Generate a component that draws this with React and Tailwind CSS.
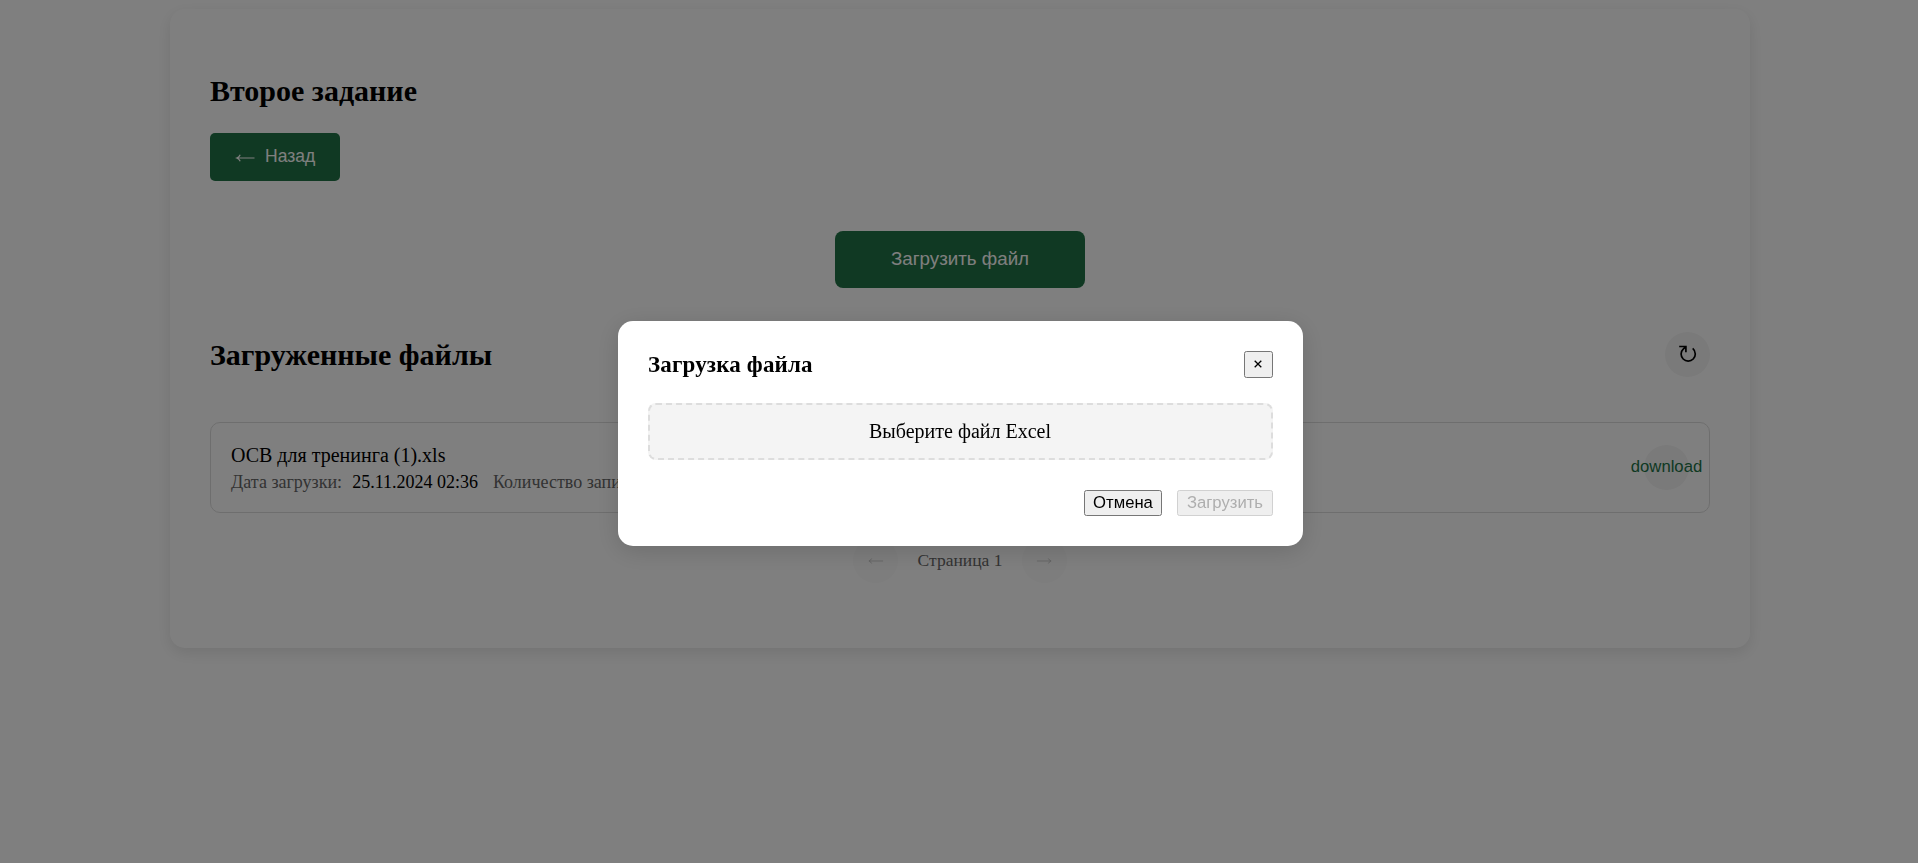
function Arrow({ className }) {
  return (
    <svg viewBox="0 0 20 10" fill="none" stroke="currentColor" strokeWidth="1.2" className={className}>
      <path d="M19.5 5H2.5M5.2 1.8Q4.4 4 1.7 5Q4.4 6 5.2 8.2" />
    </svg>
  );
}

function FileRow() {
  return (
    <div className="flex h-[91px] items-center justify-between rounded-[10px] border border-[#ddd] pl-5 pr-5">
      <div className="flex flex-col">
        <div className="text-[20px] leading-[25px]">ОСВ для тренинга (1).xls</div>
        <div className="mt-[3px] flex whitespace-nowrap text-[18px] leading-[22px] text-[#666]">
          <span>Дата загрузки:</span>
          <span className="ml-[10px] text-black">25.11.2024 02:36</span>
          <span className="ml-[15px]">Количество записей:</span>
          <span className="ml-[10px] text-black">12</span>
        </div>
      </div>
      <button className="flex size-[45px] items-center justify-center rounded-full bg-[#f4f4f4] pb-[2px] font-['Liberation_Sans',sans-serif] text-[16.67px] text-[#217346]">
        download
      </button>
    </div>
  );
}

function Modal() {
  return (
    <div className="fixed inset-0 bg-black/50 pl-[618px] pt-[321px]">
      <div className="flex h-[225px] w-[685px] flex-col rounded-[15px] bg-white p-[30px] shadow-[0_5px_25px_rgba(0,0,0,0.15)]">
        <div className="flex h-[27px] items-center justify-between">
          <h3 className="text-[23px] font-bold leading-[26px] tracking-[0.15px]">Загрузка файла</h3>
          <button className="flex h-[27px] w-[29px] items-center justify-center rounded-[2.5px] border border-[#767676] bg-[#efefef] pb-[2px] pr-px">
            <svg viewBox="0 0 8 8" className="size-2" fill="none" stroke="currentColor" strokeWidth="1.3">
              <path d="M.7 .7L7.3 7.3M7.3 .7L.7 7.3" />
            </svg>
          </button>
        </div>
        <div className="mt-[25px] flex h-[57px] items-center justify-center rounded-[8px] border-2 border-dashed border-[#ddd] bg-[#f4f4f4] pb-px pr-px text-[20px] leading-6">
          Выберите файл Excel
        </div>
        <div className="mt-[30px] flex justify-end gap-[15px] font-['Liberation_Sans',sans-serif] text-[16.67px] leading-5">
          <button className="h-[26px] w-[78px] rounded-[2.5px] border border-[#767676] bg-[#efefef]">Отмена</button>
          <button disabled className="h-[26px] w-[96px] rounded-[2.5px] border border-[#d1d1d1] bg-[#efefef] text-[#aeaeae]">
            Загрузить
          </button>
        </div>
      </div>
    </div>
  );
}

export default function App() {
  return (
    <div className="h-[863px] overflow-hidden bg-white pl-[170px] pt-[9px] font-['Liberation_Serif',serif] text-black">
      <main className="h-[639px] w-[1580px] rounded-[15px] bg-white px-10 pt-[65px] shadow-[0_5px_15px_rgba(0,0,0,0.1)]">
        <h2 className="text-[30px] font-bold leading-[34px]">Второе задание</h2>
        <button className="mt-[25px] flex h-12 w-[130px] items-center rounded-[5px] bg-[#217346] pb-[2px] pl-[25px] font-['Liberation_Sans',sans-serif] text-[17.5px] text-white">
          <Arrow className="mt-[3px] h-[10px] w-5" />
          <span className="ml-[10px]">Назад</span>
        </button>
        <div className="mt-[50px] flex justify-center">
          <button className="h-[57px] w-[250px] rounded-[8px] bg-[#217346] font-['Liberation_Sans',sans-serif] text-[18.75px] text-white">
            Загрузить файл
          </button>
        </div>
        <div className="mt-11 flex h-[45px] items-center justify-between">
          <h2 className="text-[30px] font-bold leading-[34px]">Загруженные файлы</h2>
          <button className="flex size-[45px] items-center justify-center rounded-full bg-[#f4f4f4] pb-px">
            <svg viewBox="0 0 18 18" className="size-[18px]" fill="none" stroke="currentColor" strokeWidth="1.7">
              <path d="M.2 1.5H6.9V7.2M6.6 1.8L4.2 4.2C2.9 5.4 2.1 7.1 2.1 9A7.1 7.1 0 0 0 16.3 9C16.3 6.6 15.3 4.7 13.7 3.4" />
            </svg>
          </button>
        </div>
        <div className="mt-[45px]">
          <FileRow />
        </div>
        <div className="mt-[25px] flex items-center justify-center gap-5 text-[17.5px] text-[#666]">
          <button disabled className="flex size-[45px] items-center justify-center rounded-full bg-[#f4f4f4]/80 text-black/35 opacity-50">
            <Arrow className="h-2 w-[17px]" />
          </button>
          <span>Страница 1</span>
          <button disabled className="flex size-[45px] items-center justify-center rounded-full bg-[#f4f4f4]/80 text-black/35 opacity-50">
            <Arrow className="h-2 w-[17px] rotate-180" />
          </button>
        </div>
      </main>
      <Modal />
    </div>
  );
}
